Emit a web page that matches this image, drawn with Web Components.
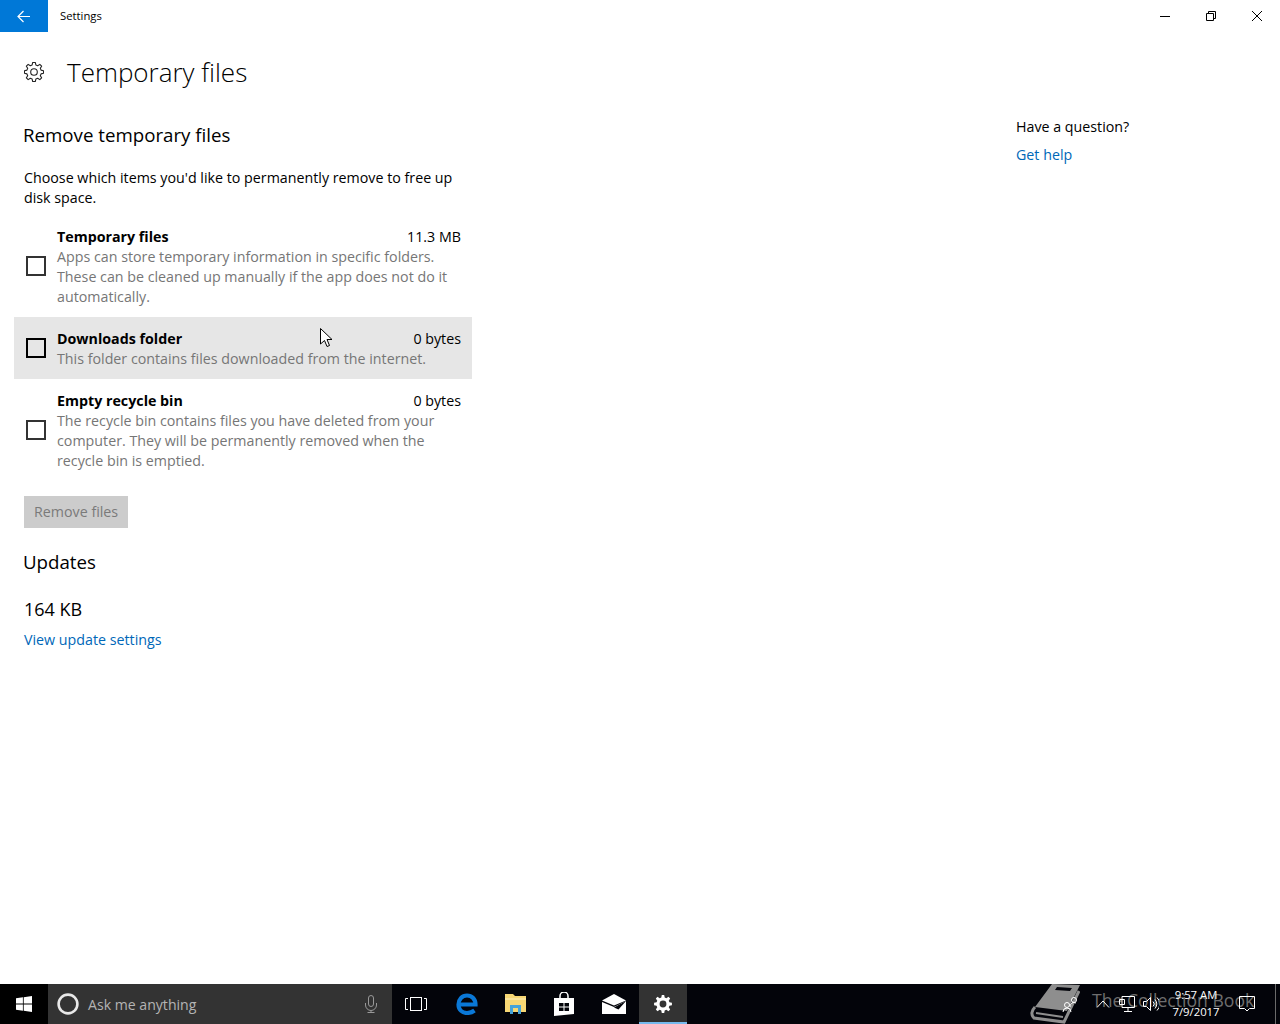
<!DOCTYPE html>
<html lang="en">
<head>
<meta charset="utf-8">
<title>Settings</title>
<style>
  html, body { margin: 0; height: 100%; }
  body { font-family: "Open Sans", "Noto Sans", sans-serif; background: #fff; overflow: hidden; }
</style>
</head>
<body>
<settings-window>
  <title-bar slot="top" label="Settings"></title-bar>
  <page-title slot="top" label="Temporary files"></page-title>

  <section-heading>Remove temporary files</section-heading>
  <intro-text>Choose which items you'd like to permanently remove to free up disk space.</intro-text>
  <file-row name="Temporary files" size="11.3 MB">Apps can store temporary information in specific folders. These can be cleaned up manually if the app does not do it automatically.</file-row>
  <file-row name="Downloads folder" size="0 bytes" hover>This folder contains files downloaded from the internet.</file-row>
  <file-row name="Empty recycle bin" size="0 bytes">The recycle bin contains files you have deleted from your computer. They will be permanently removed when the recycle bin is emptied.</file-row>
  <remove-button>Remove files</remove-button>
  <section-heading class="updates">Updates</section-heading>
  <update-size>164 KB</update-size>
  <help-link>View update settings</help-link>

  <help-panel slot="aside"></help-panel>
  <win-taskbar slot="bottom"></win-taskbar>
</settings-window>
<mouse-cursor></mouse-cursor>

<script>
// gear outline shared by the header and the taskbar icon
function gearPath(c, outer, inner, teeth) {
  const step = Math.PI * 2 / teeth;
  let d = "";
  for (let i = 0; i < teeth; i++) {
    const a = i * step - Math.PI / 2;
    const pts = [
      [outer, a - step * 0.17], [outer, a + step * 0.17],
      [inner, a + step * 0.33], [inner, a + step * 0.67]
    ].map(([r, t]) => (c + r * Math.cos(t)).toFixed(2) + " " + (c + r * Math.sin(t)).toFixed(2));
    d += (i ? "L" : "M") + pts.join("L");
  }
  return d + "Z";
}

class SettingsWindow extends HTMLElement {
  connectedCallback() {
    this.attachShadow({ mode: "open" });
    this.shadowRoot.innerHTML = `
      <style>
        :host { display: flex; flex-direction: column; height: 1024px; }
        .body { flex: 1; display: grid; grid-template-columns: 458px 264px; justify-content: space-between; padding: 0 0 0 14px; min-height: 0; }
        .left { display: flex; flex-direction: column; }
      </style>
      <slot name="top"></slot>
      <div class="body">
        <div class="left"><slot></slot></div>
        <div><slot name="aside"></slot></div>
      </div>
      <slot name="bottom"></slot>
    `;
  }
}

class TitleBar extends HTMLElement {
  connectedCallback() {
    this.attachShadow({ mode: "open" });
    this.shadowRoot.innerHTML = `
      <style>
        :host { display: flex; align-items: center; height: 32px; font-size: 11.3px; color: #000; }
        .back { width: 48px; height: 32px; background: #0078d7; display: flex; align-items: center; justify-content: center; }
        .label { margin-left: 12px; flex: 1; position: relative; top: -1px; }
        .btn { width: 46px; height: 32px; display: flex; align-items: center; justify-content: center; }
        svg { display: block; }
      </style>
      <div class="back">
        <svg width="13" height="13" viewBox="0 0 13 13" fill="none" stroke="#fff" stroke-width="1.2" style="margin-left:-2px"><path d="M1 6.500H13M6.500 1 1 6.500 6.500 12"/></svg>
      </div>
      <div class="label">${this.getAttribute("label")}</div>
      <div class="btn"><svg width="10" height="10" fill="none" stroke="#000"><path d="M0 5.500H10"/></svg></div>
      <div class="btn"><svg width="10" height="10" fill="none" stroke="#000"><path d="M.5 2.500H7.500V9.500H.5ZM2.500 2.500V.5H9.500V7.500H7.500"/></svg></div>
      <div class="btn"><svg width="10" height="10" fill="none" stroke="#000"><path d="M0 0 10 10M10 0 0 10"/></svg></div>
    `;
  }
}

class PageTitle extends HTMLElement {
  connectedCallback() {
    this.attachShadow({ mode: "open" });
    this.shadowRoot.innerHTML = `
      <style>
        :host { display: flex; align-items: center; height: 80px; padding-left: 24px; font-size: 26px; font-weight: 300; color: #000; }
        svg { display: block; margin-right: 23px; }
      </style>
      <svg width="20" height="20" viewBox="0 0 20 20" fill="none" stroke="#222" stroke-width="1.1">
        <path d="${gearPath(10, 9.6, 7.3, 8)}" stroke-linejoin="round"/>
        <circle cx="10" cy="10" r="3.3"/>
      </svg>
      <span>${this.getAttribute("label")}</span>
    `;
  }
}

class SectionHeading extends HTMLElement {
  connectedCallback() {
    this.attachShadow({ mode: "open" });
    this.shadowRoot.innerHTML = `
      <style>
        :host { display: block; margin: 11px 0 0 9px; font-size: 18.7px; line-height: 24px; color: #000; }
        :host(.updates) { margin-top: 22px; }
      </style>
      <slot></slot>
    `;
  }
}

class IntroText extends HTMLElement {
  connectedCallback() {
    this.attachShadow({ mode: "open" });
    this.shadowRoot.innerHTML = `
      <style>
        :host { display: block; margin: 21px 0 7px 10px; width: 440px; font-size: 14.25px; line-height: 20px; color: #000; }
      </style>
      <slot></slot>
    `;
  }
}

class FileRow extends HTMLElement {
  connectedCallback() {
    this.attachShadow({ mode: "open" });
    this.shadowRoot.innerHTML = `
      <style>
        :host { display: flex; align-items: center; padding: 11px 11px 11px 12px; font-size: 14.25px; line-height: 20px; }
        :host([hover]) { background: #e6e6e6; }
        .box { width: 20px; height: 20px; box-sizing: border-box; border: 2px solid #333; flex: none; margin-right: 11px; }
        :host([hover]) .box { border-color: #000; }
        .text { flex: 1; min-width: 0; margin: 1px 0 -1px; }
        .head { display: flex; justify-content: space-between; color: #000; }
        .name { font-weight: 700; }
        .desc { color: #767676; }
      </style>
      <div class="box"></div>
      <div class="text">
        <div class="head"><span class="name">${this.getAttribute("name")}</span><span>${this.getAttribute("size")}</span></div>
        <div class="desc"><slot></slot></div>
      </div>
    `;
  }
}

class RemoveButton extends HTMLElement {
  connectedCallback() {
    this.attachShadow({ mode: "open" });
    this.shadowRoot.innerHTML = `
      <style>
        :host { display: inline-flex; align-self: flex-start; align-items: center; height: 32px; margin: 15px 0 0 10px; padding: 0 10px 1px; box-sizing: border-box; background: #cccccc; color: #7a7a7a; font-size: 14.25px; }
      </style>
      <slot></slot>
    `;
  }
}

class UpdateSize extends HTMLElement {
  connectedCallback() {
    this.attachShadow({ mode: "open" });
    this.shadowRoot.innerHTML = `
      <style>
        :host { display: block; margin: 23px 0 0 10px; font-size: 18px; line-height: 24px; color: #000; }
      </style>
      <slot></slot>
    `;
  }
}

class HelpLink extends HTMLElement {
  connectedCallback() {
    this.attachShadow({ mode: "open" });
    this.shadowRoot.innerHTML = `
      <style>
        :host { display: block; margin: 9px 0 0 10px; font-size: 14.25px; line-height: 20px; color: #0067b8; }
      </style>
      <slot></slot>
    `;
  }
}

class HelpPanel extends HTMLElement {
  connectedCallback() {
    this.attachShadow({ mode: "open" });
    this.shadowRoot.innerHTML = `
      <style>
        :host { display: block; padding-top: 5px; font-size: 14.25px; line-height: 20px; color: #000; }
        a { display: block; margin-top: 8px; color: #0067b8; text-decoration: none; }
      </style>
      <div>Have a question?</div>
      <a>Get help</a>
    `;
  }
}

class WinTaskbar extends HTMLElement {
  connectedCallback() {
    this.attachShadow({ mode: "open" });
    this.shadowRoot.innerHTML = `
      <style>
        :host { display: flex; align-items: stretch; height: 40px; background: #03040a; position: relative; color: #fff; }
        svg { display: block; }
        .start { width: 48px; display: flex; align-items: center; justify-content: center; background: #000; }
        .search { width: 344px; background: #333; display: flex; align-items: center; color: #b4b4b4; font-size: 14.1px; }
        .search .ring { margin: 0 9px 0 9px; }
        .search span { flex: 1; }
        .search .mic { margin-right: 14px; }
        .app { width: 49px; display: flex; align-items: center; justify-content: center; box-sizing: border-box; }
        .active { width: 48px; background: #333; border-bottom: 2px solid #76b9ed; padding-top: 2px; }
        .tray { margin-left: auto; display: flex; align-items: center; position: relative; z-index: 1; }
        .clock { width: 54px; text-align: center; font-size: 11.3px; line-height: 17px; color: #fff; margin: -2px 0 0 10px; white-space: nowrap; }
        .note { margin: 0 20px 0 16px; }
        .peek { width: 1px; background: #6a6a6a; align-self: stretch; margin-right: 4px; }
      </style>
      <div class="start">
        <svg width="16" height="16" viewBox="0 0 16 16" fill="#fff"><path d="M0 2.300 6.900 1.300V7.600H0ZM7.700 1.200 16 0V7.600H7.700ZM0 8.400H6.900V14.700L0 13.700ZM7.700 8.400H16V16L7.700 14.800Z"/></svg>
      </div>
      <div class="search">
        <svg class="ring" width="22" height="22" viewBox="0 0 22 22" fill="none" stroke="#e8e8e8" stroke-width="2.600"><circle cx="11" cy="11" r="9.400"/></svg>
        <span>Ask me anything</span>
        <svg class="mic" width="14" height="18" viewBox="0 0 14 18" fill="none" stroke="#999" stroke-width="1"><rect x="4.500" y=".5" width="5" height="11" rx="2.500"/><path d="M1.500 8V10A5.500 5.500 0 0 0 12.500 10V8M7 15.500V17.500M3.500 17.500H10.500"/></svg>
      </div>
      <div class="app" style="margin-left:-1px">
        <svg width="22" height="14" viewBox="0 0 22 14" fill="none" stroke="#fff" stroke-width="1"><rect x="5.500" y=".5" width="11" height="13"/><path d="M3 1.500H.5V12.500H3M19 1.500H21.500V12.500H19"/></svg>
      </div>
      <div class="app" style="margin-left:2px">
        <svg width="22" height="22" viewBox="0 0 22 22" fill="none" stroke="#0a78d7" stroke-width="4.200"><path d="M3 11.500H19.500C19.500 6 16 2.500 11 2.500 6 2.500 2.500 6.500 2.500 11.500 2.500 17 6.500 20 11 20 14 20 16.500 19 18.500 17.500"/></svg>
      </div>
      <div class="app">
        <svg width="21" height="20" viewBox="0 0 21 20"><path d="M0 0H8L10 2H21V18H0Z" fill="#f7d774"/><path d="M0 4H21V6H0Z" fill="#fbe49a"/><path d="M5 20V11H16V20H13V14H8V20Z" fill="#45a3d9"/></svg>
      </div>
      <div class="app" style="margin-left:-1px">
        <svg width="20" height="24" viewBox="0 0 20 24" fill="#fff"><path d="M0 6H20V22L0 24Z"/><path d="M6 7V4A4 4 0 0 1 14 4V7" fill="none" stroke="#fff" stroke-width="1.500"/><path d="M5 11H9.500V14.500H5ZM10.500 11H15V14.500H10.500ZM5 15.500H9.500V19H5ZM10.500 15.500H15V19H10.500Z" fill="#03040a"/></svg>
      </div>
      <div class="app" style="margin-left:1px">
        <svg width="24" height="20" viewBox="0 0 24 20" fill="#fff"><path d="M0 6.500 12 0 24 6.500 12 11.500Z"/><path d="M0 8 12 13 24 7V20H0Z"/><path d="M12 13.500 24 7 16.500 15.500Z" fill="#03040a"/></svg>
      </div>
      <div class="app active" style="margin-left:1px">
        <svg width="18" height="18" viewBox="0 0 20 20"><path fill="#fff" fill-rule="evenodd" d="${gearPath(10, 10, 7.4, 8)}M10 6.200a3.800 3.800 0 1 0 0 7.600 3.800 3.800 0 0 0 0-7.600Z"/></svg>
      </div>
      <div class="tray">
        <svg width="20" height="20" viewBox="0 0 20 20" fill="none" stroke="#fff" stroke-width="1" style="margin-right:15px"><circle cx="13" cy="6" r="2.500"/><path d="M9 13A4 4 0 0 1 15 9"/><circle cx="6" cy="11" r="2.500"/><path d="M2 18A4 4 0 0 1 10 18"/></svg>
        <svg width="14" height="8" viewBox="0 0 14 8" fill="none" stroke="#fff" stroke-width="1"><path d="M1 7.500 7 1 13 7.500"/></svg>
        <svg width="16" height="16" viewBox="0 0 16 16" fill="none" stroke="#fff" stroke-width="1" style="margin-left:9px"><path d="M3 .5H15.500V11.500H3ZM.5 3.500H5.500V8.500H.5ZM9 11.500V15.500M5 15.500H13"/></svg>
        <svg width="16" height="16" viewBox="0 0 16 16" fill="none" stroke="#fff" stroke-width="1" style="margin-left:8px"><path d="M.5 5.500H3.500L7.500 1.500V14.500L3.500 10.500H.5ZM10 5.500A3.500 3.500 0 0 1 10 10.500M12 3.500A6.500 6.500 0 0 1 12 12.500M14 1.500A9 9 0 0 1 14 14.500"/></svg>
        <div class="clock">9:57 AM<br>7/9/2017</div>
        <svg class="note" width="16" height="16" viewBox="0 0 16 16" fill="none" stroke="#fff" stroke-width="1"><path d="M.5 .5H15.500V12.500H10.500L8 15 5.500 12.500H.5Z"/></svg>
        <div class="peek"></div>
      </div>
      <brand-mark></brand-mark>
    `;
  }
}

// watermark that sits behind the tray icons
class BrandMark extends HTMLElement {
  connectedCallback() {
    this.attachShadow({ mode: "open" });
    this.shadowRoot.innerHTML = `
      <style>
        :host { position: absolute; left: 1030px; top: -2px; display: flex; align-items: center; height: 42px; color: #6e6e6e; font-size: 17.6px; pointer-events: none; }
        svg { display: block; margin-right: 12px; }
        span { white-space: nowrap; position: relative; top: -3px; }
      </style>
      <svg width="50" height="42" viewBox="0 0 50 42">
        <path fill="#8e8e8e" fill-rule="evenodd" d="M22 2 50 3 37 29 5 25ZM27 5 25 8 40 9 42 6Z"/>
        <path fill="none" stroke="#8e8e8e" stroke-width="3" d="M5 25C1 29 1 33 4 36L34 40 49 9"/>
        <path fill="none" stroke="#8e8e8e" stroke-width="2" d="M6 31 33 35"/>
      </svg>
      <span>The Collection Book</span>
    `;
  }
}

class MouseCursor extends HTMLElement {
  connectedCallback() {
    this.attachShadow({ mode: "open" });
    this.shadowRoot.innerHTML = `
      <style>
        :host { position: absolute; left: 320px; top: 328px; width: 13px; height: 20px; }
        svg { display: block; }
      </style>
      <svg width="13" height="20" viewBox="0 0 13 20"><path d="M.5 .5V16L4.500 12.500 7 18.500 9.500 17.500 7 11.500H12Z" fill="#fff" stroke="#000" stroke-width="1"/></svg>
    `;
  }
}

customElements.define("settings-window", SettingsWindow);
customElements.define("title-bar", TitleBar);
customElements.define("page-title", PageTitle);
customElements.define("section-heading", SectionHeading);
customElements.define("intro-text", IntroText);
customElements.define("file-row", FileRow);
customElements.define("remove-button", RemoveButton);
customElements.define("update-size", UpdateSize);
customElements.define("help-link", HelpLink);
customElements.define("help-panel", HelpPanel);
customElements.define("win-taskbar", WinTaskbar);
customElements.define("brand-mark", BrandMark);
customElements.define("mouse-cursor", MouseCursor);
</script>
</body>
</html>
